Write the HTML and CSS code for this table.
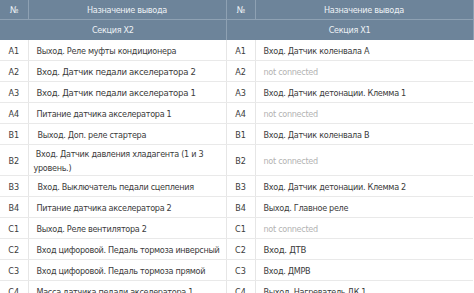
FILE: index.html
```html
<!DOCTYPE html>
<html lang="ru">
<head>
<meta charset="utf-8">
<link rel="stylesheet" href="styles.css">
</head>
<body>
<table class="pins">
  <colgroup>
    <col class="c-num"><col class="c-desc"><col class="c-num2"><col class="c-desc2">
  </colgroup>
  <thead>
    <tr class="head">
      <th>№</th><th>Назначение вывода</th><th>№</th><th>Назначение вывода</th>
    </tr>
    <tr class="section">
      <th colspan="2">Секция X2</th><th colspan="2">Секция X1</th>
    </tr>
  </thead>
  <tbody>
    <tr><td class="n">A1</td><td>Выход. Реле муфты кондиционера</td><td class="n">A1</td><td>Вход. Датчик коленвала А</td></tr>
    <tr><td class="n">A2</td><td class="lg">Вход. Датчик педали акселератора 2</td><td class="n">A2</td><td class="nc">not connected</td></tr>
    <tr><td class="n">A3</td><td class="lg">Вход. Датчик педали акселератора 1</td><td class="n">A3</td><td>Вход. Датчик детонации. Клемма 1</td></tr>
    <tr><td class="n">A4</td><td>Питание датчика акселератора 1</td><td class="n">A4</td><td class="nc">not connected</td></tr>
    <tr><td class="n">B1</td><td class="ind">Выход. Доп. реле стартера</td><td class="n">B1</td><td>Вход. Датчик коленвала В</td></tr>
    <tr class="tall"><td class="n">B2</td><td class="wrap">&nbsp;Вход. Датчик давления хладагента (1 и 3 уровень.)</td><td class="n">B2</td><td class="nc">not connected</td></tr>
    <tr><td class="n">B3</td><td class="ind">Вход. Выключатель педали сцепления</td><td class="n">B3</td><td>Вход. Датчик детонации. Клемма 2</td></tr>
    <tr><td class="n">B4</td><td>Питание датчика акселератора 2</td><td class="n">B4</td><td>Выход. Главное реле</td></tr>
    <tr><td class="n">C1</td><td>Выход. Реле вентилятора 2</td><td class="n">C1</td><td class="nc">not connected</td></tr>
    <tr><td class="n">C2</td><td>Вход цифоровой. Педаль тормоза инверсный</td><td class="n">C2</td><td class="lg">Вход. ДТВ</td></tr>
    <tr><td class="n">C3</td><td>Вход цифоровой. Педаль тормоза прямой</td><td class="n">C3</td><td>Вход. ДМРВ</td></tr>
    <tr><td class="n">C4</td><td>Масса датчика педали акселератора 1</td><td class="n">C4</td><td>Выход. Нагреватель ДК 1</td></tr>
  </tbody>
</table>
</body>
</html>
```

FILE: styles.css
```css
html, body {
  margin: 0;
  padding: 0;
  background: #ffffff;
}
body {
  font-family: "DejaVu Sans Condensed", "DejaVu Sans", sans-serif;
  font-size: 9px;
  letter-spacing: -0.3px;
  color: #3b3b3b;
  overflow: hidden;
}
.pins {
  border-collapse: collapse;
  table-layout: fixed;
  width: 473px;
}
.c-num { width: 28px; }
.c-desc { width: 198px; }
.c-num2 { width: 29px; }
.c-desc2 { width: 218px; }
.pins th {
  background: #6d849a;
  color: #eef2f6;
  font-weight: normal;
  font-size: 9px;
  height: 19px;
  padding: 0;
  border: 1px solid #8ea1b3;
  border-top: none;
  text-align: center;
}
.pins .head th:first-child, .pins .section th:first-child { border-left: none; }
.pins .section th { border-bottom: none; height: 20px; }
.pins td {
  height: 19px;
  padding: 1px 6px 0 8px;
  border-bottom: 1px solid #e9e9e9;
  border-left: 1px solid #e6e6e6;
  vertical-align: middle;
  white-space: nowrap;
}
.pins td:first-child { border-left: none; }
.pins td.n {
  text-align: center;
  padding: 1px 0 0 0;
  letter-spacing: 0;
}
.pins td.lg { font-size: 9.5px; }
.pins td.ind { padding-left: 9px; }
.pins td.nc { color: #b3b3b3; }
.pins tr.tall td { height: 29px; }
.pins td.wrap {
  white-space: normal;
  padding-left: 5px;
  padding-right: 20px;
  line-height: 14px;
}
```
